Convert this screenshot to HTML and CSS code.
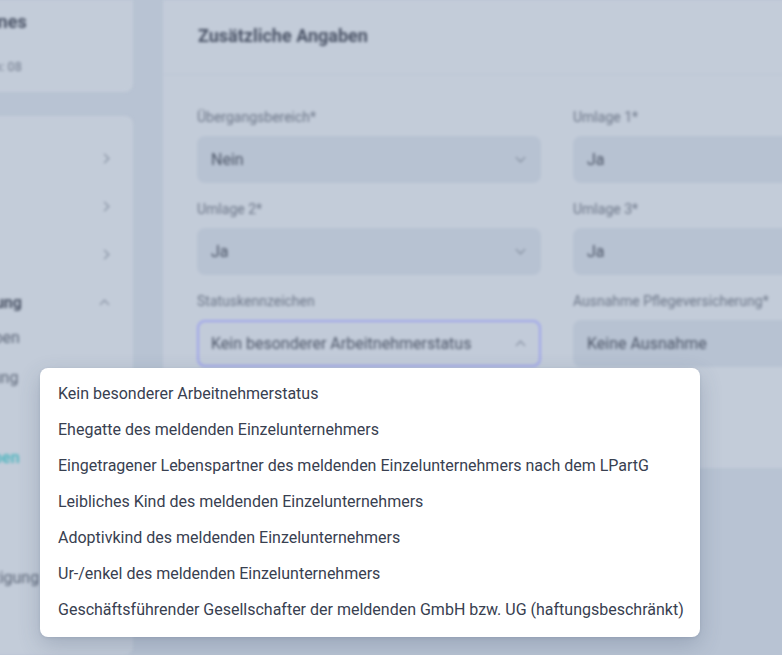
FILE: index.html
```html
<!DOCTYPE html>
<html lang="de">
<head>
<meta charset="UTF-8">
<meta name="viewport" content="width=device-width,initial-scale=1.0">
<title>Zusätzliche Angaben</title>
<link rel="stylesheet" href="styles.css">
</head>
<body>

<div class="app">
  <aside class="sidebar">
    <div class="card person">
      <div class="person-name">Maximilian Jones</div>
      <div class="person-meta">Personalnummer intern: 08</div>
    </div>

    <nav class="card nav">
      <div class="nav-item"><span>Übersicht</span><i class="chev right"></i></div>
      <div class="nav-item"><span>Stammdaten</span><i class="chev right"></i></div>
      <div class="nav-item"><span>Verträge</span><i class="chev right"></i></div>
      <div class="nav-item open"><span>Personalabrechnung</span><i class="chev up"></i></div>
      <div class="sub">
        <div class="sub-item">Persönliche Angaben</div>
        <div class="sub-item">Krankenversicherung</div>
        <div class="sub-item">Vergütung</div>
        <div class="sub-item active">Zusätzliche Angaben</div>
        <div class="sub-item">Arbeitszeitmodell</div>
        <div class="sub-item">Lohnarten</div>
        <div class="sub-item">Mehrfachbeschäftigung</div>
      </div>
    </nav>
  </aside>

  <main class="panel">
    <div class="panel-head">Zusätzliche Angaben</div>
    <div class="panel-body">
      <div class="field">
        <label>Übergangsbereich*</label>
        <div class="select"><span>Nein</span><i class="chev down"></i></div>
      </div>
      <div class="field">
        <label>Umlage 1*</label>
        <div class="select"><span>Ja</span><i class="chev down"></i></div>
      </div>
      <div class="field">
        <label>Umlage 2*</label>
        <div class="select"><span>Ja</span><i class="chev down"></i></div>
      </div>
      <div class="field">
        <label>Umlage 3*</label>
        <div class="select"><span>Ja</span><i class="chev down"></i></div>
      </div>
      <div class="field">
        <label>Statuskennzeichen</label>
        <div class="select focus"><span>Kein besonderer Arbeitnehmerstatus</span><i class="chev up"></i></div>
      </div>
      <div class="field">
        <label>Ausnahme Pflegeversicherung*</label>
        <div class="select"><span>Keine Ausnahme</span><i class="chev down"></i></div>
      </div>
    </div>
  </main>
</div>

<!-- offene Auswahlliste für Statuskennzeichen -->
<ul class="options">
  <li>Kein besonderer Arbeitnehmerstatus</li>
  <li>Ehegatte des meldenden Einzelunternehmers</li>
  <li>Eingetragener Lebenspartner des meldenden Einzelunternehmers nach dem LPartG</li>
  <li>Leibliches Kind des meldenden Einzelunternehmers</li>
  <li>Adoptivkind des meldenden Einzelunternehmers</li>
  <li>Ur-/enkel des meldenden Einzelunternehmers</li>
  <li>Geschäftsführender Gesellschafter der meldenden GmbH bzw. UG (haftungsbeschränkt)</li>
</ul>

</body>
</html>
```

FILE: styles.css
```css
html, body {
  margin: 0;
  height: 100%;
  overflow: hidden;
}

body {
  font-family: Roboto, "Noto Sans", sans-serif;
  background: #b8c3d3;
  color: #4b5567;
}

/* der Hintergrund liegt gedimmt und unscharf hinter dem Menü */
.app {
  display: flex;
  gap: 30px;
  height: 100%;
  filter: blur(1.4px);
}

.sidebar {
  flex: 0 0 280px;
  margin-left: -147px;
  display: flex;
  flex-direction: column;
  gap: 24px;
}

.card {
  background: #c3ccd9;
  border-radius: 0 0 8px 8px;
}

.person {
  height: 92px;
  box-sizing: border-box;
  padding: 10px 20px 0 31px;
}

.person-name {
  font-size: 18px;
  font-weight: 700;
  line-height: 24px;
  color: #4a5366;
}

.person-meta {
  margin: 25px 0 0 -13px;
  font-size: 12.5px;
  line-height: 16px;
  color: #6f798b;
}

.nav {
  flex: 1;
  border-radius: 8px;
  padding: 18px 0 0;
}

.nav-item {
  display: flex;
  align-items: center;
  justify-content: space-between;
  height: 48px;
  padding: 0 25px 0 20px;
  font-size: 16px;
  color: #525c6e;
}

.nav-item.open {
  font-weight: 700;
  color: #4a5366;
}

.sub {
  margin-top: -8px;
}

.sub-item {
  height: 40px;
  line-height: 40px;
  padding-left: 16px;
  font-size: 16px;
  color: #5b6577;
  white-space: nowrap;
}

.sub-item.active {
  color: #4fb5bf;
  font-weight: 600;
}

.chev {
  display: inline-block;
  width: 6px;
  height: 6px;
  border-right: 1.6px solid #7a8496;
  border-bottom: 1.6px solid #7a8496;
}

.chev.right { transform: rotate(-45deg); }
.chev.down  { transform: translateY(-2px) rotate(45deg); }
.chev.up    { transform: translateY(2px) rotate(-135deg); }

.panel {
  flex: 0 0 900px;
  align-self: flex-start;
  height: 468px;
  background: #c3ccd9;
  border-radius: 0 0 0 8px;
}

.panel-head {
  height: 75px;
  box-sizing: border-box;
  padding: 24px 35px 0;
  border-bottom: 1px solid #bcc6d4;
  font-size: 18px;
  font-weight: 700;
  line-height: 24px;
  color: #4a5366;
}

.panel-body {
  display: grid;
  grid-template-columns: 344px 344px;
  column-gap: 32px;
  row-gap: 17px;
  padding: 33px 34px 0;
}

.field label {
  display: block;
  font-size: 14px;
  line-height: 18px;
  color: #6c7688;
  margin-bottom: 10px;
}

.select {
  display: flex;
  align-items: center;
  justify-content: space-between;
  height: 47px;
  box-sizing: border-box;
  padding: 0 17px 0 14px;
  background: #b7c2d2;
  border-radius: 8px;
  font-size: 16px;
  color: #4c5567;
}

.select.focus {
  background: #c2cbd9;
  border: 2px solid #9ea4ec;
  padding: 0 15px 0 12px;
}

/* Auswahlliste */
.options {
  position: absolute;
  left: 40px;
  top: 368px;
  margin: 0;
  padding: 8px 16px 9px 18px;
  list-style: none;
  background: #fff;
  border-radius: 8px;
  box-shadow: 0 8px 22px rgba(60, 76, 104, 0.24), 0 1px 3px rgba(60, 76, 104, 0.12);
  font-size: 16px;
  color: #384050;
}

.options li {
  height: 36px;
  line-height: 36px;
  white-space: nowrap;
}
```
